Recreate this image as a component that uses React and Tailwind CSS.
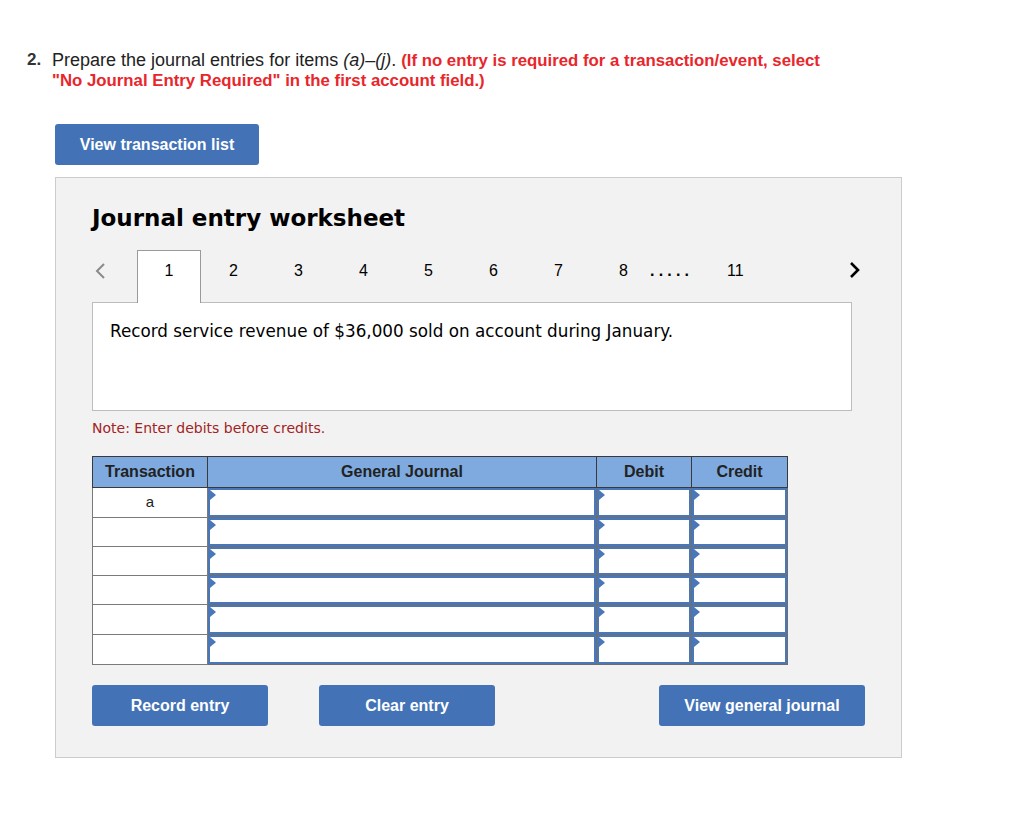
import React from 'react';

const arial = { fontFamily: '"Liberation Sans", Arial, sans-serif' };
const verdana = { fontFamily: '"DejaVu Sans", Verdana, sans-serif' };

const rowHeights = [30, 29, 29, 29, 30, 30];

function Chevron({ dir, className }) {
  const d = dir === 'left' ? 'M9 1 L2 8 L9 15' : 'M2 1 L9 8 L2 15';
  return (
    <svg width="11" height="16" viewBox="0 0 11 16" className={className}>
      <path d={d} fill="none" stroke="currentColor" strokeWidth={dir === 'left' ? 2 : 2.6} />
    </svg>
  );
}

function InputCell({ h }) {
  return (
    <td className="border border-[#6e6e6e] p-0 align-top">
      <div className="relative w-full border-2 border-[#4a77b8] bg-white" style={{ height: h - 1 }}>
        <span className="absolute left-0 top-0 h-0 w-0 border-y-[5px] border-l-[6px] border-y-transparent border-l-[#4a77b8]" />
      </div>
    </td>
  );
}

function BlueButton({ children, className }) {
  return (
    <button
      className={'h-[41px] rounded-[3px] bg-[#4372b6] text-[16px] font-bold text-white ' + className}
      style={arial}
    >
      {children}
    </button>
  );
}

export default function App() {
  return (
    <div className="min-h-[837px] bg-white pb-10 pl-[27px] pt-[50px] text-[#222]" style={arial}>
      <div className="flex h-[40px] text-[18px] leading-[20px]">
        <span className="w-[25px] shrink-0 text-[17px] font-bold text-[#333]">2.</span>
        <p className="leading-[20px]">
          Prepare the journal entries for items <i>(a)</i>–<i>(j)</i>.{' '}
          <b className="text-[16.8px] leading-[16px] text-[#e8262b]">
            (If no entry is required for a transaction/event, select
            <br />
            "No Journal Entry Required" in the first account field.)
          </b>
        </p>
      </div>

      <BlueButton className="ml-[28px] mt-[34px] w-[204px]">View transaction list</BlueButton>

      <div className="ml-[28px] mt-[12px] w-[847px] border border-[#cccccc] bg-[#f2f2f2] pb-[31px] pl-[36px] pt-[26px]">
        <h2 className="text-[23px] font-bold leading-[28px] text-black" style={verdana}>
          Journal entry worksheet
        </h2>

        <div className="mt-[18px] flex h-[52px] w-[768px] items-start text-[16px] text-black">
          <div className="w-[45px] pl-[3px] pt-[13px] text-[#8a8a8a]">
            <Chevron dir="left" />
          </div>
          <div className="relative z-10 -mb-px h-[53px] w-[64px] border border-b-0 border-[#9a9a9a] bg-white pt-[8px] text-center">
            1
          </div>
          {['2', '3', '4', '5', '6', '7'].map(n => (
            <div key={n} className="w-[65px] pt-[9px] text-center">{n}</div>
          ))}
          <div className="w-[59px] pl-[28px] pt-[9px]">8</div>
          <div className="w-[77px] pt-[9px] font-bold tracking-[4.2px]">.....</div>
          <div className="pt-[9px]">11</div>
          <div className="ml-auto pt-[12px]">
            <Chevron dir="right" />
          </div>
        </div>

        <div className="h-[109px] w-[760px] border border-[#bdbdbd] bg-white pl-[17px] pt-[17px] text-[16.8px] leading-[22px] text-black" style={verdana}>
          Record service revenue of $36,000 sold on account during January.
        </div>

        <p className="mt-[8px] text-[14px] leading-[18px] text-[#a3231f]" style={verdana}>
          Note: Enter debits before credits.
        </p>

        <table className="mt-[19px] w-[696px] table-fixed border-collapse bg-white text-[16px]">
          <colgroup>
            <col className="w-[115px]" />
            <col className="w-[389px]" />
            <col className="w-[95px]" />
            <col className="w-[96px]" />
          </colgroup>
          <thead>
            <tr className="h-[31px] bg-[#7eaae0] font-bold text-[#222]">
              <th className="border border-[#3a3a3a] font-bold">Transaction</th>
              <th className="border border-[#3a3a3a] font-bold">General Journal</th>
              <th className="border border-[#3a3a3a] font-bold">Debit</th>
              <th className="border border-[#3a3a3a] font-bold">Credit</th>
            </tr>
          </thead>
          <tbody>
            {rowHeights.map((h, i) => (
              <tr key={i} style={{ height: h }}>
                <td className="border border-[#7a7a7a] text-center align-middle text-[15px]">
                  {i === 0 ? 'a' : ''}
                </td>
                <InputCell h={h} />
                <InputCell h={h} />
                <InputCell h={h} />
              </tr>
            ))}
          </tbody>
        </table>

        <div className="mt-[20px] flex">
          <BlueButton className="w-[176px]">Record entry</BlueButton>
          <BlueButton className="ml-[51px] w-[176px]">Clear entry</BlueButton>
          <BlueButton className="ml-[164px] w-[206px]">View general journal</BlueButton>
        </div>
      </div>
    </div>
  );
}
